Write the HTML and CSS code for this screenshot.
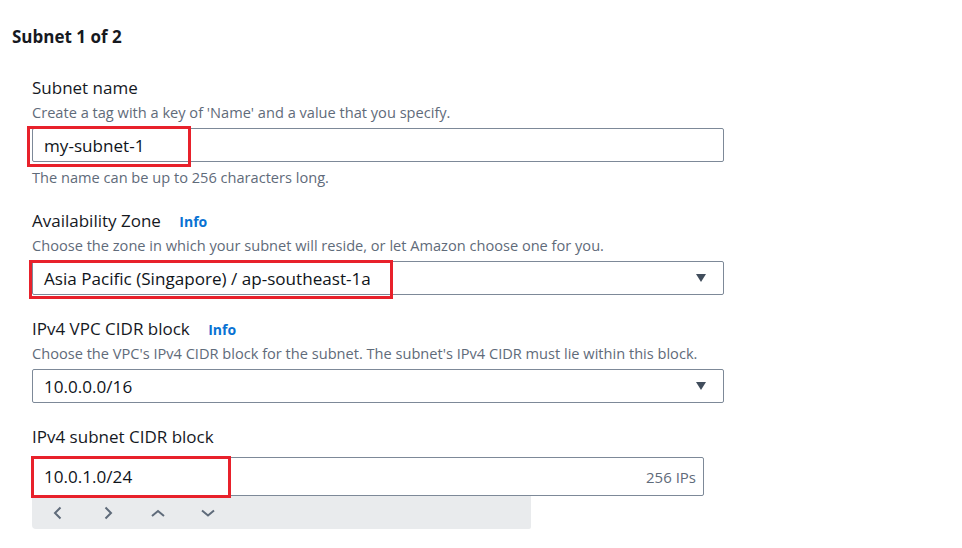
FILE: index.html
```html
<!DOCTYPE html>
<html>
<head>
<meta charset="utf-8">
<link rel="stylesheet" href="styles.css">
</head>
<body>
<div class="page">
  <h2 class="heading">Subnet 1 of 2</h2>
  <div class="fields">
    <div class="field">
      <div class="label">Subnet name</div>
      <div class="desc">Create a tag with a key of 'Name' and a value that you specify.</div>
      <div class="control input">
        <span class="value">my-subnet-1</span>
        <span class="mark mark-1"></span>
      </div>
      <div class="constraint">The name can be up to 256 characters long.</div>
    </div>
    <div class="field">
      <div class="label">Availability Zone <a class="info">Info</a></div>
      <div class="desc">Choose the zone in which your subnet will reside, or let Amazon choose one for you.</div>
      <div class="control select">
        <span class="value">Asia Pacific (Singapore) / ap-southeast-1a</span>
        <svg class="caret" width="10" height="8" viewBox="0 0 10 8"><path d="M0 0H10L5 8Z" fill="#414d5c"/></svg>
        <span class="mark mark-2"></span>
      </div>
    </div>
    <div class="field">
      <div class="label">IPv4 VPC CIDR block <a class="info">Info</a></div>
      <div class="desc">Choose the VPC's IPv4 CIDR block for the subnet. The subnet's IPv4 CIDR must lie within this block.</div>
      <div class="control select">
        <span class="value">10.0.0.0/16</span>
        <svg class="caret" width="10" height="8" viewBox="0 0 10 8"><path d="M0 0H10L5 8Z" fill="#414d5c"/></svg>
      </div>
    </div>
    <div class="field">
      <div class="label">IPv4 subnet CIDR block</div>
      <div class="cidr">
        <div class="control input tall">
          <span class="value">10.0.1.0/24</span>
          <span class="suffix">256 IPs</span>
          <span class="mark mark-3"></span>
        </div>
        <div class="stepper">
          <span class="step"><svg width="16" height="16" viewBox="0 0 16 16"><path d="M10.5 2.5L5 8l5.5 5.5" fill="none" stroke="#5f6b7a" stroke-width="2"/></svg></span>
          <span class="step"><svg width="16" height="16" viewBox="0 0 16 16"><path d="M5.5 2.5L11 8l-5.5 5.5" fill="none" stroke="#5f6b7a" stroke-width="2"/></svg></span>
          <span class="step"><svg width="16" height="16" viewBox="0 0 16 16"><path d="M2 11l6-5 6 5" fill="none" stroke="#5f6b7a" stroke-width="2"/></svg></span>
          <span class="step"><svg width="16" height="16" viewBox="0 0 16 16"><path d="M2 5.5l6 5 6-5" fill="none" stroke="#5f6b7a" stroke-width="2"/></svg></span>
        </div>
      </div>
    </div>
  </div>
</div>
</body>
</html>
```
FILE: styles.css
```css
html, body {
  margin: 0;
  padding: 0;
  background: #ffffff;
}
body {
  font-family: "Open Sans", "Noto Sans", sans-serif;
  color: #16191f;
  width: 962px;
  height: 548px;
  overflow: hidden;
}
.page {
  padding: 25.4px 0 0 12px;
}
.heading {
  margin: 0;
  font-size: 17px;
  line-height: 24px;
  font-weight: 700;
}
.fields {
  display: flex;
  flex-direction: column;
  padding-left: 20px;
  margin-top: 27px;
  gap: 22px;
}
.field {
  display: flex;
  flex-direction: column;
}
.label {
  font-size: 17px;
  line-height: 24px;
  height: 24px;
}
.info {
  color: #0972d3;
  font-weight: 700;
  font-size: 14px;
  line-height: 14px;
  margin-left: 14px;
}
.desc {
  font-size: 14.6px;
  line-height: 20px;
  color: #5f6b7a;
  margin-top: 2px;
  margin-bottom: 6px;
}
.constraint {
  font-size: 14.6px;
  line-height: 20px;
  color: #5f6b7a;
  margin-top: 5px;
}
.control {
  position: relative;
  box-sizing: border-box;
  width: 692px;
  height: 34px;
  border: 1px solid #7d8998;
  border-radius: 2px;
  display: flex;
  align-items: center;
  padding: 0 11px;
  font-size: 17.1px;
  color: #0f141a;
}
.select {
  justify-content: space-between;
  padding-right: 17px;
}
.caret {
  display: block;
}
.cidr {
  display: flex;
  flex-direction: column;
  margin-top: 8px;
}
.tall {
  width: 672px;
  height: 39px;
  justify-content: space-between;
  padding-right: 7px;
}
.suffix {
  font-size: 15px;
  color: #5f6b7a;
}
.stepper {
  box-sizing: border-box;
  width: 499px;
  height: 33px;
  background: #e9ebed;
  border-radius: 0 0 2px 4px;
  display: flex;
  align-items: center;
  padding-left: 17.5px;
  gap: 34px;
}
.step {
  display: flex;
  width: 16px;
  height: 16px;
}
.mark {
  position: absolute;
  border: 3px solid #e8212b;
  box-sizing: border-box;
  pointer-events: none;
}
.mark-1 {
  left: -6px;
  top: -3px;
  width: 164px;
  height: 41px;
}
.mark-2 {
  left: -4px;
  top: -2px;
  width: 364px;
  height: 39px;
}
.mark-3 {
  left: -2px;
  top: -2px;
  width: 200px;
  height: 42px;
}
```
